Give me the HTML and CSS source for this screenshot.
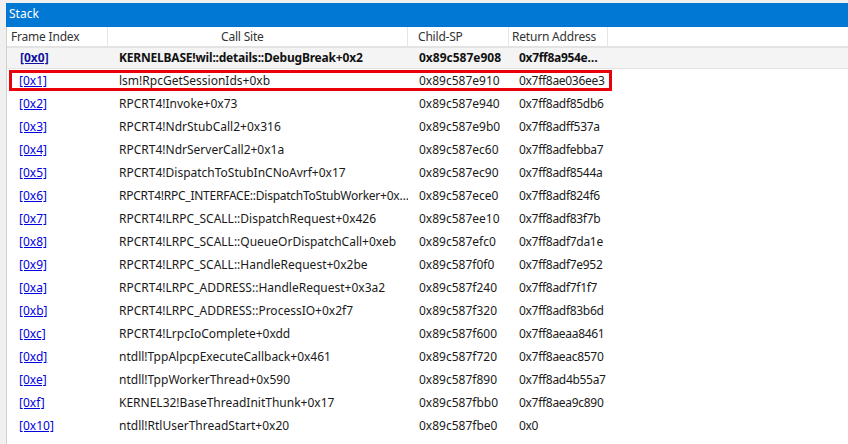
FILE: index.html
```html
<!DOCTYPE html>
<html>
<head>
<meta charset="utf-8">
<link rel="stylesheet" href="styles.css">
</head>
<body>
<div class="pane">
  <div class="title">Stack</div>
  <div class="list">
    <div class="head">
      <div class="c c1">Frame Index</div>
      <div class="c c2">Call Site</div>
      <div class="c c3">Child-SP</div>
      <div class="c c4">Return Address</div>
      <div class="c rest"></div>
    </div>
    <div class="row sel">
      <div class="c c1"><a class="lnk">[0x0]</a></div>
      <div class="c c2">KERNELBASE!wil::details::DebugBreak+0x2</div>
      <div class="c c3">0x89c587e908</div>
      <div class="c c4">0x7ff8a954e…</div>
    </div>
    <div class="row hl">
      <div class="c c1"><a class="lnk">[0x1]</a></div>
      <div class="c c2">lsm!RpcGetSessionIds+0xb</div>
      <div class="c c3">0x89c587e910</div>
      <div class="c c4">0x7ff8ae036ee3</div>
      <div class="box"></div>
    </div>
    <div class="row"><div class="c c1"><a class="lnk">[0x2]</a></div><div class="c c2">RPCRT4!Invoke+0x73</div><div class="c c3">0x89c587e940</div><div class="c c4">0x7ff8adf85db6</div></div>
    <div class="row"><div class="c c1"><a class="lnk">[0x3]</a></div><div class="c c2">RPCRT4!NdrStubCall2+0x316</div><div class="c c3">0x89c587e9b0</div><div class="c c4">0x7ff8adff537a</div></div>
    <div class="row"><div class="c c1"><a class="lnk">[0x4]</a></div><div class="c c2">RPCRT4!NdrServerCall2+0x1a</div><div class="c c3">0x89c587ec60</div><div class="c c4">0x7ff8adfebba7</div></div>
    <div class="row"><div class="c c1"><a class="lnk">[0x5]</a></div><div class="c c2">RPCRT4!DispatchToStubInCNoAvrf+0x17</div><div class="c c3">0x89c587ec90</div><div class="c c4">0x7ff8adf8544a</div></div>
    <div class="row"><div class="c c1"><a class="lnk">[0x6]</a></div><div class="c c2 tight">RPCRT4!RPC_INTERFACE::DispatchToStubWorker+0x…</div><div class="c c3">0x89c587ece0</div><div class="c c4">0x7ff8adf824f6</div></div>
    <div class="row"><div class="c c1"><a class="lnk">[0x7]</a></div><div class="c c2">RPCRT4!LRPC_SCALL::DispatchRequest+0x426</div><div class="c c3">0x89c587ee10</div><div class="c c4">0x7ff8adf83f7b</div></div>
    <div class="row"><div class="c c1"><a class="lnk">[0x8]</a></div><div class="c c2">RPCRT4!LRPC_SCALL::QueueOrDispatchCall+0xeb</div><div class="c c3">0x89c587efc0</div><div class="c c4">0x7ff8adf7da1e</div></div>
    <div class="row"><div class="c c1"><a class="lnk">[0x9]</a></div><div class="c c2">RPCRT4!LRPC_SCALL::HandleRequest+0x2be</div><div class="c c3">0x89c587f0f0</div><div class="c c4">0x7ff8adf7e952</div></div>
    <div class="row"><div class="c c1"><a class="lnk">[0xa]</a></div><div class="c c2">RPCRT4!LRPC_ADDRESS::HandleRequest+0x3a2</div><div class="c c3">0x89c587f240</div><div class="c c4">0x7ff8adf7f1f7</div></div>
    <div class="row"><div class="c c1"><a class="lnk">[0xb]</a></div><div class="c c2">RPCRT4!LRPC_ADDRESS::ProcessIO+0x2f7</div><div class="c c3">0x89c587f320</div><div class="c c4">0x7ff8adf83b6d</div></div>
    <div class="row"><div class="c c1"><a class="lnk">[0xc]</a></div><div class="c c2">RPCRT4!LrpcIoComplete+0xdd</div><div class="c c3">0x89c587f600</div><div class="c c4">0x7ff8aeaa8461</div></div>
    <div class="row"><div class="c c1"><a class="lnk">[0xd]</a></div><div class="c c2">ntdll!TppAlpcpExecuteCallback+0x461</div><div class="c c3">0x89c587f720</div><div class="c c4">0x7ff8aeac8570</div></div>
    <div class="row"><div class="c c1"><a class="lnk">[0xe]</a></div><div class="c c2">ntdll!TppWorkerThread+0x590</div><div class="c c3">0x89c587f890</div><div class="c c4">0x7ff8ad4b55a7</div></div>
    <div class="row"><div class="c c1"><a class="lnk">[0xf]</a></div><div class="c c2">KERNEL32!BaseThreadInitThunk+0x17</div><div class="c c3">0x89c587fbb0</div><div class="c c4">0x7ff8aea9c890</div></div>
    <div class="row"><div class="c c1"><a class="lnk">[0x10]</a></div><div class="c c2">ntdll!RtlUserThreadStart+0x20</div><div class="c c3">0x89c587fbe0</div><div class="c c4">0x0</div></div>
  </div>
</div>
</body>
</html>
```

FILE: styles.css
```css
html, body {
  margin: 0;
  padding: 0;
  background: #f0f0f0;
  height: 444px;
  overflow: hidden;
}
body {
  font-family: "Noto Sans", "Open Sans", sans-serif;
  font-size: 12px;
  color: #1a1a1a;
}
.pane {
  margin: 3px 0 0 6px;
  height: 441px;
  display: flex;
  flex-direction: column;
}
.title {
  background: #0078d4;
  color: #ffffff;
  height: 24px;
  line-height: 22px;
  padding-left: 3px;
  flex: none;
}
.list {
  flex: 1;
  background: #ffffff;
  border-left: 1px solid #d0d0d0;
}
.head {
  display: flex;
  height: 19px;
  border-bottom: 2px solid #e3e3e3;
  color: #333333;
}
.head .c {
  border-right: 1px solid #e5e5e5;
  line-height: 19px;
  letter-spacing: -0.2px;
}
.head .c1 { padding-left: 4px; }
.head .c2 { padding-left: 113px; }
.head .c3 { padding-left: 10px; }
.head .c4 { padding-left: 3px; }
.head .rest { flex: 1; border-right: none; }
.c {
  box-sizing: border-box;
  white-space: nowrap;
  overflow: hidden;
  flex: none;
}
.c1 { width: 101px; }
.c2 { width: 300px; }
.c3 { width: 101px; }
.c4 { width: 99px; }
.row {
  display: flex;
  height: 23px;
  line-height: 23px;
  position: relative;
}
.row .c1 { padding-left: 12px; }
.row .c2 { padding-left: 11px; }
.row .c2.tight { letter-spacing: -0.25px; }
.row .c3 { padding-left: 11px; }
.row .c4 { padding-left: 10px; overflow: visible; letter-spacing: -0.3px; }
.row.sel {
  height: 20px;
  line-height: 20px;
  background: #f4f4f4;
  border-bottom: 1px solid #e3e3e3;
  font-weight: bold;
  color: #111111;
}
.row.sel .c2 { letter-spacing: -0.2px; }
.row.sel .c1 { padding-left: 13px; }
.lnk {
  color: #0000e0;
  text-decoration: underline;
}
.row.sel .lnk { color: #1010a0; }
.box {
  position: absolute;
  left: 2px;
  top: 1px;
  width: 603px;
  height: 21px;
  box-sizing: border-box;
  border: 3px solid #e8000b;
}
```
